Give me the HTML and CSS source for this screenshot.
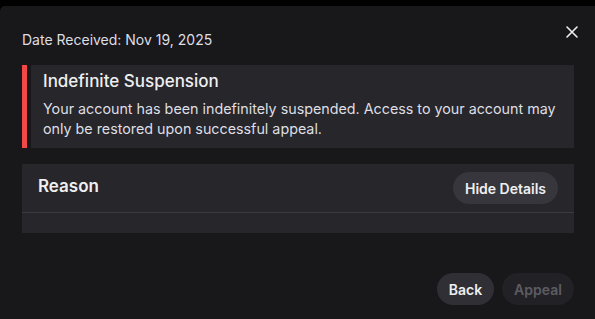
FILE: index.html
```html
<!DOCTYPE html>
<html lang="en">
<head>
<meta charset="utf-8">
<link rel="stylesheet" href="styles.css">
</head>
<body>
<div class="modal">
  <button class="close" aria-label="Close">
    <svg width="12" height="12" viewBox="0 0 12 12"><path d="M1 1 L11 11 M11 1 L1 11" stroke="#efeff1" stroke-width="1.6" stroke-linecap="round" fill="none"/></svg>
  </button>
  <div class="date">Date Received: Nov 19, 2025</div>
  <div class="alert">
    <div class="alert-bar"></div>
    <div class="alert-body">
      <div class="alert-title">Indefinite Suspension</div>
      <div class="alert-text">Your account has been indefinitely suspended. Access to your account may only be restored upon successful appeal.</div>
    </div>
  </div>
  <div class="reason">
    <div class="reason-head">
      <div class="reason-title">Reason</div>
      <button class="btn btn-panel">Hide Details</button>
    </div>
    <div class="reason-body"></div>
  </div>
  <div class="footer">
    <button class="btn btn-secondary">Back</button>
    <button class="btn btn-disabled">Appeal</button>
  </div>
</div>
</body>
</html>
```

FILE: styles.css
```css
html, body {
  margin: 0;
  padding: 0;
  height: 100%;
  overflow: hidden;
  background: #000;
}
body {
  font-family: Inter, "Noto Sans", sans-serif;
  color: #efeff1;
  padding-top: 6px;
  box-sizing: border-box;
}
.modal {
  position: relative;
  background: #18181b;
  border-top-left-radius: 5px;
  height: 100%;
  padding: 24px 21px 0 22px;
  box-sizing: border-box;
}
.close {
  position: absolute;
  top: 20px;
  right: 17px;
  width: 12px;
  height: 12px;
  padding: 0;
  border: 0;
  background: none;
  display: flex;
}
.date {
  font-size: 14px;
  line-height: 20px;
  color: #dedee3;
}
.alert {
  display: flex;
  margin-top: 15px;
  height: 83px;
}
.alert-bar {
  width: 5px;
  background: #f24848;
  flex: none;
}
.alert-body {
  flex: 1;
  margin-left: 4px;
  background: #26262b;
  padding: 5px 12px 0 12px;
}
.alert-title {
  font-size: 17px;
  line-height: 22px;
  font-weight: 500;
  color: #efeff1;
}
.alert-text {
  margin-top: 7px;
  font-size: 14.3px;
  line-height: 19.5px;
  color: #dedee3;
}
.reason {
  margin-top: 16px;
  background: #26262b;
}
.reason-head {
  display: flex;
  align-items: center;
  justify-content: space-between;
  height: 48px;
  padding: 0 16px;
  border-bottom: 1px solid #3a3a40;
}
.reason-title {
  font-size: 17px;
  font-weight: 600;
  margin-top: -5px;
}
.reason-body {
  height: 20px;
}
.btn {
  font-family: inherit;
  font-size: 14px;
  font-weight: 600;
  height: 32px;
  border: 0;
  border-radius: 16px;
  padding: 0;
  color: #efeff1;
}
.btn-panel {
  background: #36363c;
  width: 105px;
}
.footer {
  display: flex;
  justify-content: flex-end;
  gap: 8px;
  margin-top: 40px;
}
.btn-secondary {
  background: #2f2f35;
  width: 57px;
}
.btn-disabled {
  background: #222226;
  color: #5c5c62;
  width: 72px;
}
```
